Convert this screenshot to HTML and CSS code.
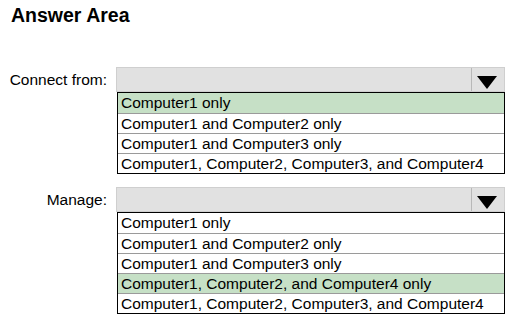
FILE: index.html
```html
<!DOCTYPE html>
<html lang="en">
  <head>
    <meta charset="UTF-8" />
    <title>Answer Area</title>
    <link rel="stylesheet" href="styles.css">
  </head>
  <body>
    <h1 class="title">Answer Area</h1>
    <div class="field first">
      <div class="label">Connect from:</div>
      <div class="dropdown">
        <div class="select">
          <span class="arrow"></span>
        </div>
        <ul class="options">
          <li class="picked">Computer1 only</li>
          <li>Computer1 and Computer2 only</li>
          <li>Computer1 and Computer3 only</li>
          <li>Computer1, Computer2, Computer3, and Computer4</li>
        </ul>
      </div>
    </div>
    <div class="field">
      <div class="label">Manage:</div>
      <div class="dropdown">
        <div class="select">
          <span class="arrow"></span>
        </div>
        <ul class="options">
          <li>Computer1 only</li>
          <li>Computer1 and Computer2 only</li>
          <li>Computer1 and Computer3 only</li>
          <li class="picked">Computer1, Computer2, and Computer4 only</li>
          <li>Computer1, Computer2, Computer3, and Computer4</li>
        </ul>
      </div>
    </div>
  </body>
</html>
```

FILE: styles.css
```css
* {
  margin: 0;
  padding: 0;
  box-sizing: border-box;
}
body {
  font-family: "Liberation Sans", Arial, sans-serif;
  color: #000;
  background: #fff;
}
.title {
  font-size: 19.5px;
  font-weight: bold;
  padding: 4px 0 0 11px;
  height: 67px;
}
.field {
  display: flex;
  align-items: flex-start;
  margin-bottom: 13px;
}
.label {
  width: 116px;
  height: 26px;
  line-height: 26px;
  text-align: right;
  padding-right: 9px;
  font-size: 15.5px;
}
.dropdown {
  width: 389px;
}
.select {
  height: 25px;
  background: #e1e1e1;
  border: 1px solid #cfcfcf;
  display: flex;
  justify-content: flex-end;
}
.arrow {
  width: 33px;
  border-left: 1px solid #b8b8b8;
  position: relative;
}
.arrow::after {
  content: "";
  position: absolute;
  left: 5px;
  top: 8px;
  border-left: 10px solid transparent;
  border-right: 10px solid transparent;
  border-top: 13px solid #000;
}
.options {
  list-style: none;
  margin-left: 1px;
  border: 1px solid #000;
}
.options > li {
  height: 20px;
  line-height: 19px;
  padding-left: 3px;
  font-size: 15.5px;
  border-top: 1px solid #9a9a9a;
  white-space: nowrap;
}
.options > li:first-child {
  border-top: none;
}
.options .picked {
  background: #c6e0c6;
}
```
